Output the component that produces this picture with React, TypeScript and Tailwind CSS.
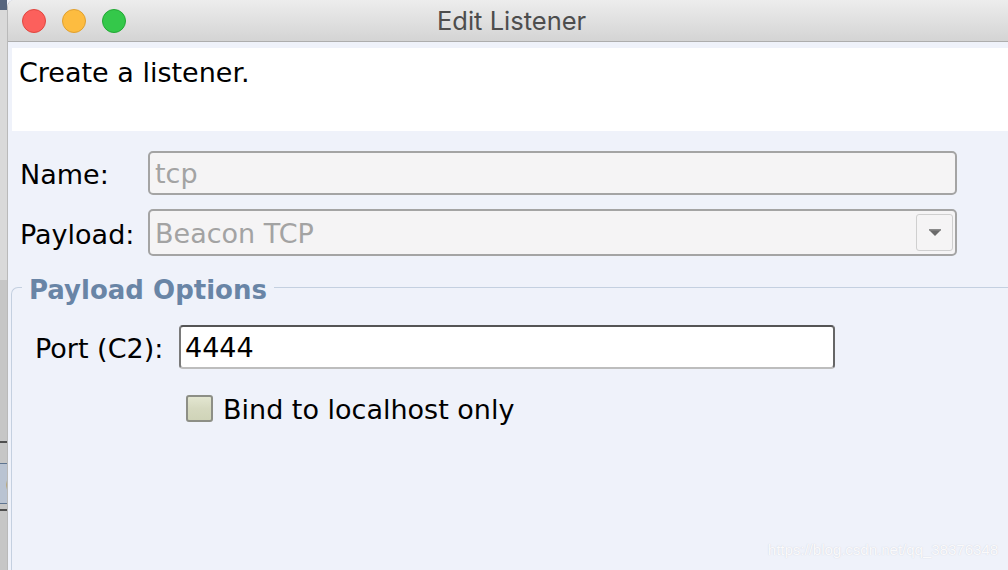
import React from "react";

const font = { fontFamily: '"DejaVu Sans", "Liberation Sans", sans-serif' };

export default function App() {
  return (
    <div
      className="w-[1008px] h-[570px] flex overflow-hidden bg-[#eff2fa] text-black relative"
      style={font}
    >
      {/* background window strip */}
      <div className="w-[7px] shrink-0 flex flex-col bg-[#cdcdcd]">
        <div className="h-[10px] bg-[#56657e]" />
        <div className="h-[270px] bg-[#d9d9d9]" />
        <div className="h-[161px] bg-[#c6c6c6]" />
        <div className="h-[2px] bg-[#4f4f4f]" />
        <div className="h-[20px] bg-[#c6c6c6]" />
        <div className="h-[1px] bg-[#5e7490]" />
        <div className="h-[39px] bg-[#b9c3d2] overflow-hidden flex items-center justify-end text-[26px] leading-none">
          <span className="-mr-[8px]">(</span>
        </div>
        <div className="h-[1px] bg-[#5e7490]" />
        <div className="h-[5px] bg-[#c6c6c6]" />
        <div className="h-[2px] bg-[#4f4f4f]" />
        <div className="flex-1 bg-[#c6c6c6]" />
      </div>

      {/* window */}
      <div className="flex-1 flex flex-col rounded-tl-[7px] overflow-hidden border-l border-[#b9b9b9] min-w-0">
        {/* title bar */}
        <div className="h-[42px] shrink-0 flex items-center bg-gradient-to-b from-[#ededed] to-[#d4d4d4] border-b border-[#adadad]">
          <div className="flex items-center gap-[16px] ml-[14px]">
            <div className="w-[24px] h-[24px] rounded-full bg-[#fc605c] border border-[#e0463f]" />
            <div className="w-[24px] h-[24px] rounded-full bg-[#fdbc40] border border-[#e0a02f]" />
            <div className="w-[24px] h-[24px] rounded-full bg-[#34c84a] border border-[#22a834]" />
          </div>
          <div
            className="ml-[311px] text-[25.5px] text-[#4d4d4d] leading-none"
            style={{ fontFamily: 'Inter, "Noto Sans", sans-serif' }}
          >
            Edit Listener
          </div>
        </div>

        {/* body */}
        <div className="flex-1 flex flex-col pl-[3px] min-h-0">
          <div className="mt-[6px] ml-[1px] h-[83px] bg-white pl-[7px] pt-[9px] text-[27px] leading-[31px]">
            Create a listener.
          </div>

          <div className="mt-[20px] ml-[1px] flex items-center">
            <div className="w-[136px] pl-[8px] pt-[3px] text-[27px] leading-[31px]">Name:</div>
            <div className="w-[809px] h-[44px] rounded-[5px] border-2 border-[#a4a4a4] bg-[#f5f4f5] flex items-center pl-[5px] pt-[3px] text-[27px] text-[#a3a3a3]">
              tcp
            </div>
          </div>

          <div className="mt-[14px] ml-[1px] flex items-center">
            <div className="w-[136px] pl-[8px] pt-[3px] text-[27px] leading-[31px]">Payload:</div>
            <div className="w-[809px] h-[47px] rounded-[5px] border-2 border-[#a4a4a4] bg-[#f5f4f5] flex items-center pl-[5px] pr-[2px] text-[27px] text-[#a3a3a3]">
              <span className="flex-1 pt-[3px]">Beacon TCP</span>
              <div className="w-[37px] h-[37px] rounded-[3px] border border-[#cfcfcf] flex items-center justify-center">
                <svg width="12" height="8" viewBox="0 0 12 8">
                  <path d="M0 1h12L6 7z" fill="#6a6a6a" />
                  <rect x="0" y="0" width="12" height="1.5" fill="#8a8a8a" />
                </svg>
              </div>
            </div>
          </div>

          <fieldset className="mt-[13px] flex-1 border-t border-l border-[#c4d0e0] rounded-tl-[7px] min-w-0">
            <legend className="ml-[10px] px-[7px] pt-[6px] text-[26px] leading-[30px] font-bold text-[#6985a6]">
              Payload Options
            </legend>

            <div className="mt-[20px] flex items-center">
              <div className="w-[167px] pl-[23px] pt-[3px] text-[27px] leading-[31px]">Port (C2):</div>
              <div className="w-[656px] h-[44px] rounded-[4px] bg-white border-2 border-t-[#555555] border-l-[#7a7a7a] border-r-[#666666] border-b-[#bdbdbd] flex items-center pl-[4px] pt-[3px] text-[27px]">
                4444
              </div>
            </div>

            <div className="mt-[23px] ml-[174px] flex items-center gap-[10px]">
              <div className="w-[27px] h-[27px] rounded-[3px] border-2 border-[#8d8f86] bg-gradient-to-b from-[#e3e6d1] via-[#d6d9c0] to-[#d0d4b8]" />
              <div className="text-[27px] leading-[31px] pt-[2px]">Bind to localhost only</div>
            </div>
          </fieldset>
        </div>
      </div>

      <div
        className="absolute right-[10px] bottom-[9px] text-[15px] text-white/90"
        style={{ fontFamily: '"Liberation Sans", Arial, sans-serif', textShadow: "0 0 1px rgba(120,120,140,0.35)" }}
      >
        https://blog.csdn.net/qq_38376348
      </div>
    </div>
  );
}
